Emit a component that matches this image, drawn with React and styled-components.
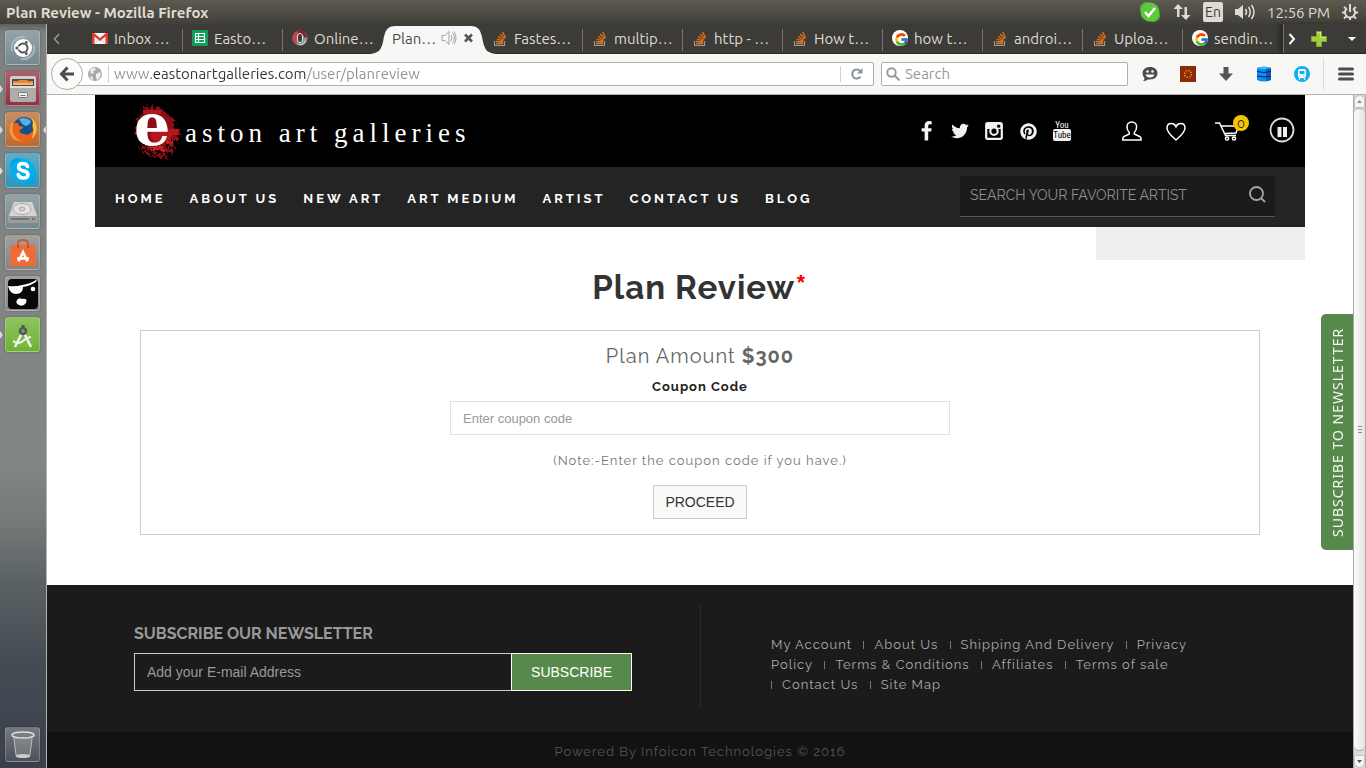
import React, { useState } from "react";
import styled, { createGlobalStyle, css } from "styled-components";
import { FaPinterest } from "react-icons/fa";
import { FcGoogle } from "react-icons/fc";

const ui = `"Ubuntu", "Open Sans", "Noto Sans", sans-serif`;
const raleway = `"Raleway", "Lato", sans-serif`;
const arial = `"Liberation Sans", Arial, sans-serif`;

const GlobalStyle = createGlobalStyle`
  * {
    box-sizing: border-box;
  }
  body {
    margin: 0;
    background: #fff;
    font-family: ${raleway};
  }
  button, input {
    margin: 0;
    outline: none;
    border-radius: 0;
  }
  button {
    cursor: pointer;
  }
  svg {
    display: block;
    flex: none;
    overflow: visible;
  }
`;

/* ---------- desktop ---------- */

const Desktop = styled.div`
  min-height: 100vh;
  display: flex;
  flex-direction: column;
`;

const TopPanel = styled.header`
  height: 24px;
  display: flex;
  align-items: center;
  justify-content: space-between;
  padding: 0 8px 0 6px;
  background: linear-gradient(#5d5b4f, #403f39);
  color: #dfdbd2;
  font-family: ${ui};
`;

const WindowTitle = styled.div`
  font-size: 15px;
  font-weight: 700;
`;

const Indicators = styled.div`
  display: flex;
  align-items: center;
  gap: 12px;
  font-size: 15px;
`;

const LangBadge = styled.span`
  width: 20px;
  height: 20px;
  border-radius: 2px;
  background: #dfdbd2;
  color: #3c3b37;
  font-size: 14px;
  line-height: 21px;
  text-align: center;
`;

const Workspace = styled.div`
  flex: 1;
  display: flex;
`;

const Launcher = styled.nav`
  width: 47px;
  flex: none;
  display: flex;
  flex-direction: column;
  gap: 6px;
  padding: 6px 6px 6px 5px;
  border-right: 1px solid #b5b3ac;
  background: linear-gradient(
    #5d5f5f,
    #7d8180 8px,
    #828685 440px,
    #747978 500px,
    #5a6164 560px,
    #454b53 640px,
    #3b414c 744px
  );
`;

const LauncherTile = styled.button`
  position: relative;
  width: 35px;
  height: 35px;
  padding: 0;
  display: flex;
  align-items: center;
  justify-content: center;
  border: 1px solid rgba(255, 255, 255, 0.22);
  border-radius: 3px;
  background: linear-gradient(rgba(255, 255, 255, 0.25), rgba(255, 255, 255, 0.03)),
    ${(props) => props.$tint};
  box-shadow: 0 0 2px rgba(0, 0, 0, 0.35);
  ${(props) =>
    props.$last &&
    css`
      margin-top: auto;
    `}
  ${(props) =>
    props.$running &&
    css`
      &::before {
        content: "";
        position: absolute;
        left: -6px;
        top: 13px;
        border: 4px solid transparent;
        border-right-width: 0;
        border-left: 3px solid #d8d8d8;
      }
    `}
  ${(props) =>
    props.$focused &&
    css`
      &::after {
        content: "";
        position: absolute;
        right: -7px;
        top: 13px;
        border: 4px solid transparent;
        border-left-width: 0;
        border-right: 3px solid #d8d8d8;
      }
    `}
`;

/* ---------- browser ---------- */

const Browser = styled.div`
  flex: 1;
  min-width: 0;
  display: flex;
  flex-direction: column;
  font-family: ${ui};
`;

const TabBar = styled.div`
  height: 30px;
  display: flex;
  background: #3c3b37;
  border-bottom: 1px solid #2b2a27;
`;

const TabScroll = styled.button`
  width: ${(props) => props.$width}px;
  flex: none;
  padding: 0;
  border: 0;
  background: none;
  display: flex;
  align-items: center;
  justify-content: center;
`;

const Tabs = styled.div`
  flex: 1;
  min-width: 0;
  margin-left: 16px;
  display: flex;
`;

const Tab = styled.button`
  position: relative;
  flex: 1 1 0;
  min-width: 0;
  height: 30px;
  padding: 0 0 2px 9px;
  border: 0;
  background: none;
  display: flex;
  align-items: center;
  gap: 6px;
  overflow: hidden;
  white-space: nowrap;
  color: #dfdbd2;
  font: 15px ${ui};
  ${(props) =>
    props.$divider &&
    css`
      &::after {
        content: "";
        position: absolute;
        right: 0;
        top: 5px;
        width: 1px;
        height: 22px;
        background: #75736b;
      }
    `}
`;

const ActiveTab = styled(Tab)`
  overflow: visible;
  gap: 5px;
  color: #4c4c4c;
  > * {
    position: relative;
  }
`;

const TabShape = styled.svg`
  && {
    position: absolute;
    left: -13px;
    bottom: 0;
    width: calc(100% + 26px);
    height: 28px;
  }
`;

const TabTools = styled.div`
  width: 83px;
  flex: none;
  display: flex;
  align-items: center;
  border-left: 1px solid #75736b;
  box-shadow: -4px 0 4px rgba(0, 0, 0, 0.3);
`;

const Toolbar = styled.div`
  height: 41px;
  display: flex;
  align-items: center;
  padding: 0 12px 0 4px;
  background: #f7f7f6;
  border-bottom: 1px solid #b4b3af;
`;

const BackButton = styled.button`
  z-index: 1;
  width: 32px;
  height: 32px;
  flex: none;
  padding: 0;
  display: flex;
  align-items: center;
  justify-content: center;
  border: 1px solid #b0afa9;
  border-radius: 50%;
  background: #fbfbfa;
`;

const UrlField = styled.div`
  flex: 1;
  min-width: 0;
  height: 24px;
  margin-left: -8px;
  padding-left: 12px;
  display: flex;
  align-items: center;
  border: 1px solid #b0afa9;
  border-radius: 2px;
  background: #fff;
`;

const UrlInput = styled.input`
  flex: 1;
  min-width: 0;
  height: 18px;
  margin-left: 6px;
  padding: 0 0 0 5px;
  border: 0;
  border-left: 1px solid #d0d0ce;
  font: 15px/18px ${ui};
  color: #8f8f8f;
  background: linear-gradient(to right, #8f8f8f 42px, #333 42px, #333 197px, #8f8f8f 197px);
  background-clip: text;
  -webkit-text-fill-color: transparent;
`;

const ReloadButton = styled.button`
  width: 33px;
  height: 16px;
  padding: 0;
  display: flex;
  align-items: center;
  justify-content: center;
  border: 0;
  border-left: 1px solid #d0d0ce;
  background: none;
`;

const SearchField = styled.label`
  width: 247px;
  height: 24px;
  margin-left: 7px;
  padding-left: 4px;
  display: flex;
  align-items: center;
  gap: 4px;
  border: 1px solid #b0afa9;
  border-radius: 2px;
  background: #fff;
`;

const SearchInput = styled.input`
  flex: 1;
  min-width: 0;
  padding: 0;
  border: 0;
  background: none;
  font: 15px/20px ${ui};
  &::placeholder {
    color: #999;
    opacity: 1;
  }
`;

const ToolButtons = styled.div`
  display: flex;
  margin-left: 3px;
`;

const ToolButton = styled.button`
  width: 38px;
  height: 32px;
  padding: 0;
  border: 0;
  background: none;
  display: flex;
  align-items: center;
  justify-content: center;
`;

const MenuButton = styled(ToolButton)`
  width: 31px;
  margin-left: 2px;
  padding-left: 13px;
  border-left: 1px solid #dcdcda;
`;

const Viewport = styled.div`
  flex: 1;
  display: flex;
  background: #fff;
`;

const Scrollbar = styled.div`
  width: 13px;
  flex: none;
  display: flex;
  flex-direction: column;
  border-left: 1px solid #a9a9a7;
  border-right: 1px solid #a9a9a7;
  background: #dcdbd9;
`;

const ScrollStep = styled.button`
  height: 13px;
  padding: 0;
  border: 1px solid #c4c3c1;
  border-radius: ${(props) => (props.$down ? "0 0 6px 6px" : "6px 6px 0 0")};
  background: #f5f5f4;
  display: flex;
  align-items: center;
  justify-content: center;
`;

const ScrollThumb = styled.div`
  flex: 1;
  margin-bottom: 4px;
  display: flex;
  flex-direction: column;
  align-items: center;
  justify-content: center;
  gap: 2px;
  border: 1px solid #a9a9a7;
  border-width: 1px 0;
  border-radius: 6px;
  background: linear-gradient(to right, #fcfcfc, #e4e3e1);
  > i {
    width: 4px;
    height: 1px;
    background: #8d8d8b;
  }
`;

/* ---------- site ---------- */

const Site = styled.div`
  position: relative;
  flex: 1;
  min-width: 0;
  display: flex;
  flex-direction: column;
  font-family: ${raleway};
`;

const Container = styled.div`
  width: 100%;
  max-width: 1210px;
  margin: 0 auto;
`;

const Masthead = styled.div`
  height: 72px;
  display: flex;
  align-items: center;
  padding: 0 10px 0 36px;
  background: #000;
`;

const Brand = styled.a`
  display: flex;
  align-items: center;
  margin-right: auto;
  color: #fff;
  text-decoration: none;
  font: 27px/32px "Liberation Serif", "Times New Roman", serif;
  letter-spacing: 5px;
  white-space: nowrap;
  span {
    padding-top: 3px;
  }
`;

const Social = styled.div`
  display: flex;
  gap: 10px;
  margin-right: 46px;
`;

const Account = styled.div`
  display: flex;
  align-items: center;
  gap: 20px;
`;

const IconLink = styled.a`
  position: relative;
  min-width: 24px;
  height: 26px;
  display: flex;
  align-items: center;
  justify-content: center;
  color: #f1f1f1;
`;

const CartLink = styled(IconLink)`
  margin-left: 7px;
`;

const CartCount = styled.span`
  position: absolute;
  top: -3px;
  right: 0;
  width: 16px;
  height: 16px;
  border-radius: 50%;
  background: #f6c500;
  color: #222;
  font-size: 13px;
  line-height: 18px;
  text-align: center;
`;

const NavBar = styled.nav`
  height: 60px;
  display: flex;
  align-items: center;
  justify-content: space-between;
  padding: 0 30px 2px 20px;
  background: #242424;
`;

const NavLinks = styled.div`
  display: flex;
  gap: 24px;
  padding-top: 5px;
`;

const NavLink = styled.a`
  color: #fff;
  font-size: 13px;
  font-weight: 700;
  line-height: 20px;
  letter-spacing: 3px;
  text-decoration: none;
  white-space: nowrap;
`;

const ArtistSearch = styled.form`
  width: 315px;
  height: 41px;
  display: flex;
  align-items: center;
  padding: 0 9px 2px 10px;
  background: #1b1b1b;
  border-bottom: 1px solid #555;
`;

const ArtistInput = styled.input`
  flex: 1;
  min-width: 0;
  padding: 0;
  border: 0;
  background: none;
  color: #ccc;
  font: 14px/20px ${raleway};
  &::placeholder {
    color: #8f8f8f;
    opacity: 1;
  }
`;

const PlainButton = styled.button`
  padding: 0;
  border: 0;
  background: none;
`;

const SideStrip = styled.div`
  width: 209px;
  height: 33px;
  margin-left: auto;
  background: #efefef;
`;

const Title = styled.h1`
  margin: 8px 0 22px;
  color: #333;
  font-size: 33px;
  font-weight: 700;
  line-height: 40px;
  letter-spacing: 1px;
  text-align: center;
  span {
    color: #f00;
  }
`;

const PlanBox = styled.form`
  margin: 0 45px 50px;
  padding: 10px 15px 15px;
  display: flex;
  flex-direction: column;
  align-items: center;
  border: 1px solid #ccc;
  letter-spacing: 1px;
`;

const Amount = styled.div`
  color: #666;
  font-size: 20px;
  line-height: 30px;
`;

const CouponLabel = styled.label`
  margin: 6px 0 4px;
  color: #222;
  font-size: 13px;
  font-weight: 700;
  line-height: 20px;
`;

const CouponInput = styled.input`
  width: 500px;
  max-width: 100%;
  height: 34px;
  padding: 0 12px;
  border: 1px solid #e1e1e1;
  background: #fff;
  color: #555;
  font: 13px ${arial};
  &::placeholder {
    color: #999;
    opacity: 1;
  }
`;

const Note = styled.p`
  margin: 16px 0 14px;
  color: #777;
  font-size: 13px;
  line-height: 20px;
`;

const ProceedButton = styled.button`
  height: 34px;
  padding: 0 11px;
  border: 1px solid #ccc;
  background: #f9f9f8;
  color: #333;
  font: 14px ${arial};
`;

const SubscribeTab = styled.button`
  position: absolute;
  right: 0;
  top: 219px;
  width: 32px;
  height: 236px;
  padding: 0;
  border: 0;
  border-radius: 0 5px 5px 0;
  background: #58894c;
  color: #f4f8f3;
  font: 14px "Noto Sans", "Open Sans", sans-serif;
  letter-spacing: 1px;
  white-space: nowrap;
  writing-mode: vertical-rl;
  transform: rotate(180deg);
`;

const Footer = styled.footer`
  flex: 1;
  padding: 19px 0 24px;
  background: #1b1b1b;
`;

const FooterColumns = styled(Container)`
  display: grid;
  grid-template-columns: 1fr 1fr;
`;

const Newsletter = styled.form`
  padding: 20px 68px 0 39px;
`;

const NewsletterTitle = styled.h4`
  margin: 0 0 9px;
  color: #999;
  font-size: 16px;
  font-weight: 700;
  line-height: 20px;
`;

const NewsletterRow = styled.div`
  display: flex;
`;

const EmailInput = styled.input`
  flex: 1;
  min-width: 0;
  height: 38px;
  padding: 0 12px;
  border: 1px solid #ccc;
  border-right: 0;
  background: transparent;
  color: #ccc;
  font: 14px ${arial};
  &::placeholder {
    color: #999;
    opacity: 1;
  }
`;

const SubscribeButton = styled.button`
  height: 38px;
  padding: 0 19px;
  border: 1px solid #fff;
  background: #58894c;
  color: #fff;
  font: 14px ${arial};
`;

const FooterNav = styled.div`
  min-height: 104px;
  padding: 31px 116px 0 70px;
  border-left: 1px solid #2a2a2a;
`;

const LinkList = styled.ul`
  margin: 0;
  padding: 0;
  list-style: none;
  color: #aaa;
  font-size: 13px;
  line-height: 20px;
  letter-spacing: 1px;
  li {
    display: inline;
    margin-right: 7px;
  }
  li + li::before {
    content: "";
    display: inline-block;
    width: 1px;
    height: 8px;
    margin-right: 10px;
    background: #777;
  }
  a {
    color: inherit;
    text-decoration: none;
  }
`;

const Copyright = styled.div`
  height: 36px;
  padding-top: 2px;
  background: #121212;
  color: #555;
  font-size: 13px;
  line-height: 36px;
  letter-spacing: 1px;
  text-align: center;
`;

/* ---------- icons ---------- */

const StackIcon = () => (
  <svg width="16" height="16" viewBox="0 0 16 16" fill="none">
    <path d="M2.500 11v4.500h10V11" stroke="#9a9a98" strokeWidth="1.200" />
    <path
      d="M4 13.500h7M4.100 11.300l6.900.700M4.700 9l6.600 1.900M6 6.500l5.900 3.200M8 4l4.800 4.600M10.700 2l2.900 6"
      stroke="#e8731b"
      strokeWidth="1.300"
    />
  </svg>
);

const GmailIcon = () => (
  <svg width="16" height="16" viewBox="0 0 16 16">
    <path d="M0 3h16v11H0z" fill="#f5f5f5" />
    <path d="M0 3h2l6 5 6-5h2v11h-2.500V6.500L8 11 2.500 6.500V14H0z" fill="#dd3b30" />
    <path d="M3 13.500 6.500 10M13 13.500 9.500 10" stroke="#ccc" />
  </svg>
);

const SheetsIcon = () => (
  <svg width="16" height="16" viewBox="0 0 16 16">
    <rect width="16" height="16" rx="1" fill="#0f9d58" />
    <path d="M3.500 3.500h9v9h-9zM3.500 6.500h9M3.500 9.500h9M6.500 3.500v9" stroke="#fff" strokeWidth="1.200" fill="none" />
  </svg>
);

const RingIcon = () => (
  <svg width="16" height="16" viewBox="0 0 16 16">
    <circle cx="8" cy="8" r="7.600" fill="#8f8f8f" />
    <path d="M9 .500a7.600 7.600 0 0 0-5 14C6 13 3 5 9 .500z" fill="#c2444c" />
    <path d="M5 1c5-2 9 1 10 6l-2 1C11 5 10 3 6 3z" fill="#8e1d25" />
    <path d="M5 14q4 1 6-1l3-4q0 5-5 6.500z" fill="#c8c8c8" />
    <ellipse cx="8" cy="8" rx="2.600" ry="4.500" fill="#3c3b37" stroke="#e6e6e6" />
  </svg>
);

const favicons = {
  gmail: <GmailIcon />,
  sheets: <SheetsIcon />,
  ring: <RingIcon />,
  stack: <StackIcon />,
  google: (
    <svg width="16" height="16" viewBox="0 0 16 16">
      <circle cx="8" cy="8" r="8" fill="#fff" />
      <FcGoogle x="2" y="2" width="12" height="12" />
    </svg>
  ),
};

const tabs = [
  { icon: "gmail", label: "Inbox …", divider: true },
  { icon: "sheets", label: "Easto…", divider: true },
  { icon: "ring", label: "Online…" },
  { label: "Plan…", active: true },
  { icon: "stack", label: "Fastes…", divider: true },
  { icon: "stack", label: "multip…", divider: true },
  { icon: "stack", label: "http - …", divider: true },
  { icon: "stack", label: "How t…", divider: true },
  { icon: "google", label: "how t…", divider: true },
  { icon: "stack", label: "androi…", divider: true },
  { icon: "stack", label: "Uploa…", divider: true },
  { icon: "google", label: "sendin…" },
];

const launcherItems = [
  {
    name: "Dash",
    tint: "#71858c",
    icon: (
      <svg width="28" height="28" viewBox="0 0 28 28" fill="none">
        <path d="M3 17C1 8 8 2 16 3M25 11c2 9-5 15-13 14" stroke="#a7b8bd" strokeWidth="2" />
        <circle cx="14" cy="14" r="9" fill="#fff" />
        <circle cx="14" cy="14" r="4.500" stroke="#555" strokeWidth="2" />
        <path d="M7 14h4M16 9.500l2-3.500M16 18.500l2 3.500" stroke="#fff" strokeWidth="3" />
        <g fill="#555">
          <circle cx="7.800" cy="14" r="1.500" />
          <circle cx="17.200" cy="8.500" r="1.500" />
          <circle cx="17.200" cy="19.500" r="1.500" />
        </g>
      </svg>
    ),
  },
  {
    name: "Files",
    tint: "#8c2c3c",
    running: true,
    icon: (
      <svg width="28" height="28" viewBox="0 0 28 28">
        <path d="M1 3q0-2 2-2h22q2 0 2 2v8H1z" fill="#d0cfcc" />
        <path d="M3 4h22v8H3z" fill="#514b46" />
        <path d="M4 6h5l1-1h8l1 1h5v4H4z" fill="#e8853a" />
        <path d="M4 8h20v2H4z" fill="#f7b377" />
        <path d="M1 11h26v14q0 2-2 2H3q-2 0-2-2z" fill="#aeadaa" />
        <path d="M1 11h26v2H1z" fill="#dededb" />
        <rect x="9.500" y="17.500" width="9" height="5" rx="1" fill="#eee" stroke="#777" />
        <path d="M11.500 20.500h5" stroke="#777" />
      </svg>
    ),
  },
  {
    name: "Firefox",
    tint: "#b5682c",
    running: true,
    focused: true,
    icon: (
      <svg width="30" height="30" viewBox="0 0 30 30">
        <circle cx="16" cy="13" r="11" fill="#17508f" />
        <path d="M11 4q7-3 12 2-1 4-5 5-4-1-7-7z" fill="#58aee0" />
        <path d="M27 8q2 4 1.500 8Q27 28 15 28.500 3 28 1.500 16q0-6 3-10 0 2 1 3 3-2 5-1-1 2 1 3l4 1q-1 2-4 3 0 4 5 4 3 2 6-1 6-5 5.500-10z" fill="#e8641b" />
        <path d="M24 3q5 5 4.500 12-1 6-5 9 3-7 1-12 1-5-.500-9z" fill="#fbc436" />
        <path d="M1.500 16q0-6 3-10 0 2 1 3-2 5 0 10 3 6 9 7-11 1-13-10z" fill="#f5993a" />
      </svg>
    ),
  },
  {
    name: "Skype",
    tint: "#2d90b4",
    running: true,
    icon: (
      <svg width="30" height="30" viewBox="0 0 30 30">
        <circle cx="9.500" cy="9.500" r="7.500" fill="#00a5e5" />
        <circle cx="20.500" cy="20.500" r="7.500" fill="#00a5e5" />
        <circle cx="15" cy="15" r="12" fill="#00aff0" />
        <path
          d="M19.500 10.500q-1-3-4.500-3-4.500 0-4.500 3.500 0 2.700 4.500 3.700 5 1 5 3.800 0 3.500-4.800 3.500-4.200 0-5-3.500"
          fill="none"
          stroke="#fff"
          strokeWidth="3.500"
          strokeLinecap="round"
        />
      </svg>
    ),
  },
  {
    name: "Disk",
    tint: "#71858c",
    icon: (
      <svg width="30" height="22" viewBox="0 0 30 22">
        <path d="M5 0h20l5 14v6q0 2-2 2H2q-2 0-2-2v-6z" fill="#9b9c9c" />
        <path d="M6 1h18l5 14H1z" fill="#d3d4d3" />
        <ellipse cx="14" cy="8" rx="9" ry="5.500" fill="#e3e3e2" stroke="#aaa" />
        <ellipse cx="14" cy="8" rx="3" ry="2" fill="#d0d0d0" stroke="#aaa" />
        <path d="M3 18h18M24 18h3" stroke="#666" strokeWidth="1.500" />
      </svg>
    ),
  },
  {
    name: "Software Center",
    tint: "#80807e",
    icon: (
      <svg width="28" height="30" viewBox="0 0 28 30">
        <path d="M9 10V5q0-3 5-3t5 3v5" fill="none" stroke="#d9572c" strokeWidth="2" />
        <path d="M2 7h24l1 20q0 1-1 1H2q-1 0-1-1z" fill="#ee6b36" />
        <path d="M9 10V7M19 10V7" stroke="#c94e26" strokeWidth="2" />
        <path d="M9.500 23.500 14 14l4.500 9.500M8 20.500h12" fill="none" stroke="#fff" strokeWidth="2.500" />
      </svg>
    ),
  },
  {
    name: "Pirate",
    tint: "#80807e",
    icon: (
      <svg width="30" height="30" viewBox="0 0 30 30">
        <rect width="30" height="30" rx="4" fill="#080808" />
        <path d="M0 7q8 1 14-1 8-1 14-5l1 1q-6 5-14 6 0 7-7 7Q2 15 0 7z" fill="#fff" />
        <circle cx="25" cy="10" r="2.300" fill="#fff" />
        <path d="M9 21q2-3 5-1 6-1 4 4-3 4-7 2-4-2-2-5z" fill="#fff" />
      </svg>
    ),
  },
  {
    name: "Android Studio",
    tint: "#6aaf2c",
    running: true,
    icon: (
      <svg width="28" height="28" viewBox="0 0 28 28" fill="none">
        <circle cx="14" cy="14" r="12" fill="#7fbf4a" opacity=".6" />
        <path d="m13 12-7 14M15 12l7 14" stroke="#f1f1f1" strokeWidth="2.500" />
        <path d="M4 20q5 4 10 0t8-4" stroke="#f1f1f1" strokeWidth="2" />
        <path d="M14 4v3" stroke="#4c5a5f" strokeWidth="3" />
        <circle cx="14" cy="10" r="3" fill="#8aa05e" stroke="#4c5a5f" strokeWidth="2.500" />
      </svg>
    ),
  },
  {
    name: "Trash",
    tint: "#454c53",
    last: true,
    icon: (
      <svg width="24" height="28" viewBox="0 0 24 28">
        <path d="m2 4 3 21q7 3 14 0l3-21z" fill="#aab0b2" opacity=".35" />
        <path d="m3 7 2 17M21 7l-2 17" stroke="#b9bdbe" />
        <ellipse cx="12" cy="25" rx="7.500" ry="2" fill="#c9cbcb" />
        <ellipse cx="12" cy="4" rx="11" ry="3" fill="#777d80" stroke="#dcdddd" strokeWidth="1.500" />
      </svg>
    ),
  },
];

const Facebook = () => (
  <svg width="21" height="21" viewBox="0 0 1792 1792" fill="currentColor">
    <path d="M1343 12v264h-157q-86 0-116 36t-30 108v189h293l-39 296h-254v759h-306v-759h-255v-296h255v-218q0-186 104-288.500t277-102.500q147 0 228 12z" />
  </svg>
);

const Twitter = () => (
  <svg width="20" height="20" viewBox="0 0 1792 1792" fill="currentColor">
    <path d="M1684 408q-67 98-162 167 1 14 1 42 0 130-38 259.500t-115.500 248.500-184.500 210.500-258 146-323 54.500q-271 0-496-145 35 4 78 4 225 0 401-138-105-2-188-64.500t-114-159.500q33 5 61 5 43 0 85-11-112-23-185.500-111.500t-73.500-205.500v-4q68 38 146 41-66-44-105-115t-39-154q0-88 44-163 121 149 294.500 238.500t371.500 99.500q-8-38-8-74 0-134 94.500-228.500t228.500-94.500q140 0 236 102 109-21 205-78-37 115-142 178 93-10 186-50z" />
  </svg>
);

const Instagram = () => (
  <svg width="18" height="18" viewBox="0 0 18 18">
    <rect x="1.200" y="1.200" width="15.600" height="15.600" rx="1.500" fill="none" stroke="currentColor" strokeWidth="2.200" />
    <path d="M1 1h16v6h-4a5 5 0 0 0-8 0H1z" fill="currentColor" />
    <circle cx="9" cy="9.200" r="3.700" fill="#000" stroke="currentColor" strokeWidth="2.200" />
    <rect x="12.200" y="2.800" width="3" height="2.800" fill="#000" />
  </svg>
);

const YouTube = () => (
  <svg
    width="18"
    height="20"
    viewBox="0 0 18 20"
    fontFamily="Ubuntu Condensed, Roboto Condensed, Liberation Sans Narrow, Liberation Sans"
    fontSize="9"
  >
    <text x="9" y="7" textAnchor="middle" fill="#fff">
      You
    </text>
    <rect x="0" y="8" width="18" height="12" rx="2" fill="#f1f1f1" />
    <text x="9" y="17" textAnchor="middle" fill="#000">
      Tube
    </text>
  </svg>
);

const LogoMark = () => (
  <svg width="54" height="72" viewBox="0 -6 54 72">
    <filter id="splatter" x="-20%" y="-20%" width="140%" height="140%">
      <feTurbulence type="fractalNoise" baseFrequency="0.35" numOctaves="2" seed="4" result="noise" />
      <feDisplacementMap in="SourceGraphic" in2="noise" scale="12" />
    </filter>
    <g filter="url(#splatter)">
      <path d="M10 10 16 6l14 1 6 5 9 8-2 10 6 1-4 12-3 8-7 5-10 0-12-3-5-5 2-6-6-10z" fill="#8c0f16" />
      <path
        d="M8 14 16 9M34 10l7 6M8 42l8 3M10 48l10 2M18 53l9-1M24 50l9 3M34 51l5 5M40 45l5 5M40 40l7 3M6 24l4 6M42 24l5-1M12 51l4 4M34 46l6 1"
        stroke="#000"
        strokeWidth="2"
      />
      <path d="M20 45h12v4H20zM36 39h5v4h-5z" fill="#c4252c" />
    </g>
    <path d="M12 9h18v4H12z" fill="#a81b21" />
    <path d="M27 28h22l-2 6h-6l-2 4-8 4-8 0-4-9z" fill="#b3161d" />
    <text x="3" y="44" fontFamily="DejaVu Serif, serif" fontWeight="700" fontSize="57" letterSpacing="0" fill="#fff">
      e
    </text>
  </svg>
);

const navItems = ["HOME", "ABOUT US", "NEW ART", "ART MEDIUM", "ARTIST", "CONTACT US", "BLOG"];

const footerLinks = [
  "My Account",
  "About Us",
  "Shipping And Delivery",
  "Privacy Policy",
  "Terms & Conditions",
  "Affiliates",
  "Terms of sale",
  "Contact Us",
  "Site Map",
];

const SystemPanel = () => (
  <TopPanel>
    <WindowTitle>Plan Review - Mozilla Firefox</WindowTitle>
    <Indicators>
      <svg width="22" height="22" viewBox="0 0 22 22">
        <circle cx="7.500" cy="7.500" r="6.500" fill="#4db82f" />
        <circle cx="14.500" cy="14.500" r="6.500" fill="#4db82f" />
        <circle cx="11" cy="11" r="9.500" fill="#5cc83b" />
        <path d="m6 11 3.500 4L16 7" fill="none" stroke="#fff" strokeWidth="2.500" />
      </svg>
      <svg width="18" height="18" viewBox="0 0 18 18" fill="#dfdbd2">
        <path d="M5 1 .500 6H4v8h2.500V6H10zM13 17l4.500-5H14V4h-2.500v8H8z" />
      </svg>
      <LangBadge>En</LangBadge>
      <svg width="20" height="18" viewBox="0 0 20 18" fill="none" stroke="#dfdbd2" strokeWidth="1.500">
        <path d="M0 6h3l5-4v14l-5-4H0z" fill="#dfdbd2" stroke="none" />
        <path d="M10.500 6q2 3 0 6M13.500 4q3.500 5 0 10M16.500 2q5 7 0 14" />
      </svg>
      <span>12:56 PM</span>
      <svg width="16" height="18" viewBox="0 0 16 18" fill="none" stroke="#dfdbd2">
        <path d="M5 5.500a5 5 0 1 0 6 0" strokeWidth="2" />
        <path d="M8 1v8" strokeWidth="2" />
        <path d="M2 4l2 1.500M14 4l-2 1.500M0 9.500h3M16 9.500h-3M2 15.500l2-2M14 15.500l-2-2M8 15v2" strokeWidth="2" />
      </svg>
    </Indicators>
  </TopPanel>
);

const BrowserTabs = () => (
  <TabBar>
    <TabScroll $width={20} aria-label="Scroll tabs left">
      <svg width="8" height="12" viewBox="0 0 8 12" fill="none" stroke="#99978f" strokeWidth="1.500">
        <path d="M6 1 1.500 6 6 11" />
      </svg>
    </TabScroll>
    <Tabs>
      {tabs.map((tab, index) =>
        tab.active ? (
          <ActiveTab key={index}>
            <TabShape viewBox="0 0 126 28" preserveAspectRatio="none">
              <path d="M0 28C9 27 11 24 13 16 15 4 17 0 26 0h74c9 0 11 4 13 16 2 8 4 11 13 12z" fill="#f7f7f6" />
            </TabShape>
            <span>{tab.label}</span>
            <svg width="16" height="16" viewBox="0 0 16 16" fill="none" stroke="#a3a3a3">
              <path d="M1 5.500h3l4-4v13l-4-4H1zM10 5q2 3 0 6M11.500 3q4 5 0 10M13 1.500q4 6.500 0 13" />
            </svg>
            <svg width="14" height="10" viewBox="0 0 14 10" fill="none" stroke="#555" strokeWidth="2.500">
              <path d="m3 1.500 7 7M10 1.500l-7 7" />
            </svg>
          </ActiveTab>
        ) : (
          <Tab key={index} $divider={tab.divider}>
            {favicons[tab.icon]}
            <span>{tab.label}</span>
          </Tab>
        )
      )}
    </Tabs>
    <TabTools>
      <TabScroll $width={16} aria-label="Scroll tabs right">
        <svg width="8" height="12" viewBox="0 0 8 12" fill="none" stroke="#fff" strokeWidth="2">
          <path d="M1.500 1 6 6l-4.500 5" />
        </svg>
      </TabScroll>
      <TabScroll $width={38} aria-label="New tab">
        <svg width="16" height="16" viewBox="0 0 16 16">
          <path d="M5.500.500h5v5h5v5h-5v5h-5v-5h-5v-5h5z" fill="#a4cc3c" stroke="#7fa52a" />
          <path d="M6.500 1.500h3v5h5" fill="none" stroke="#d3e88d" />
        </svg>
      </TabScroll>
      <TabScroll $width={28} aria-label="List all tabs">
        <svg width="8" height="4" viewBox="0 0 8 4">
          <path d="M0 0h8L4 4z" fill="#fff" />
        </svg>
      </TabScroll>
    </TabTools>
  </TabBar>
);

const BrowserToolbar = () => {
  const [url, setUrl] = useState("www.eastonartgalleries.com/user/planreview");
  return (
    <Toolbar>
      <BackButton aria-label="Back">
        <svg width="16" height="16" viewBox="0 0 16 16" fill="none" stroke="#4c4c4c" strokeWidth="3">
          <path d="M8.500 1.500 2.500 8l6 6.500M3 8h12" />
        </svg>
      </BackButton>
      <UrlField>
        <svg width="14" height="14" viewBox="0 0 14 14">
          <circle cx="7" cy="7" r="7" fill="#a9a9a9" />
          <path d="M2 3q3-3 5-2l1 2-3 1 1 2-3 1zM8 7l4-2 1 2-2 5-2 1-1-3zM2 9l3 1v3L3 12z" fill="#eee" />
        </svg>
        <UrlInput aria-label="Address" value={url} onChange={(e) => setUrl(e.target.value)} />
        <ReloadButton aria-label="Reload">
          <svg width="12" height="12" viewBox="0 0 12 12">
            <path d="M9.500 8.500a4.500 4.500 0 1 1 0-5" fill="none" stroke="#8792a0" strokeWidth="2" />
            <path d="M11.500 0v5.500H6z" fill="#8792a0" />
          </svg>
        </ReloadButton>
      </UrlField>
      <SearchField>
        <svg width="15" height="15" viewBox="0 0 15 15" fill="none" stroke="#999" strokeWidth="2">
          <circle cx="5.500" cy="5.500" r="4.200" />
          <path d="m8.500 8.500 5 5" />
        </svg>
        <SearchInput placeholder="Search" aria-label="Search" />
      </SearchField>
      <ToolButtons>
        <ToolButton aria-label="Chat">
          <svg width="16" height="16" viewBox="0 0 16 16">
            <path d="M8 1c4.500 0 7.500 2.700 7.500 6.300S12.500 13.500 8 13.500l-2 0Q4 15 1 15q1.500-1 1.500-3Q.500 10 .500 7.300C.500 3.700 3.500 1 8 1z" fill="#4c4c4c" />
            <circle cx="5.500" cy="5.500" r="1.200" fill="#fff" />
            <circle cx="10.500" cy="5.500" r="1.200" fill="#fff" />
            <path d="M3.500 8.500h9q-1 3-4.500 3T3.500 8.500z" fill="#fff" />
          </svg>
        </ToolButton>
        <ToolButton aria-label="Extension">
          <svg width="16" height="16" viewBox="0 0 16 16">
            <path d="M0 0h16v16H0z" fill="#8d2a06" />
            <circle cx="8" cy="8" r="3.500" fill="none" stroke="#e2911f" strokeWidth="1.500" strokeDasharray="1.500 1.200" />
          </svg>
        </ToolButton>
        <ToolButton aria-label="Downloads">
          <svg width="16" height="16" viewBox="0 0 16 16">
            <path d="M5.500 1h5v6.500H15L8 15 1 7.500h4.500z" fill="#555" />
          </svg>
        </ToolButton>
        <ToolButton aria-label="Database">
          <svg width="14" height="16" viewBox="0 0 14 16">
            <path d="M0 2q7-3 14 0v12q-7 3-14 0z" fill="#0b8ff0" />
            <path d="M9 1l5 1v12l-5 1z" fill="#0a5cc4" />
            <path d="M0 5.500q7 2 14 0M0 10q7 2 14 0" fill="none" stroke="#06265c" />
            <path d="M0 2q7-2 14 0-7 2-14 0z" fill="#35c4fa" />
          </svg>
        </ToolButton>
        <ToolButton aria-label="Transit">
          <svg width="16" height="16" viewBox="0 0 16 16">
            <circle cx="8" cy="8" r="8" fill="#0fb0f0" />
            <rect x="4" y="3" width="8" height="9" rx="2" fill="#fff" />
            <path d="M5.500 5h5v3h-5z" fill="#0fb0f0" />
            <path d="m5 14 1-2M11 14l-1-2" stroke="#fff" />
            <path d="M5.500 10h1M9.500 10h1" stroke="#0fb0f0" />
          </svg>
        </ToolButton>
        <MenuButton aria-label="Menu">
          <svg width="16" height="14" viewBox="0 0 16 14" stroke="#4c4c4c" strokeWidth="3" strokeLinecap="round">
            <path d="M1.500 2h13M1.500 7h13M1.500 12h13" />
          </svg>
        </MenuButton>
      </ToolButtons>
    </Toolbar>
  );
};

const SiteHeader = () => (
  <Container>
    <Masthead>
      <Brand href="#">
        <LogoMark />
        <span>aston art galleries</span>
      </Brand>
      <Social>
        <IconLink href="#" aria-label="Facebook"><Facebook /></IconLink>
        <IconLink href="#" aria-label="Twitter"><Twitter /></IconLink>
        <IconLink href="#" aria-label="Instagram"><Instagram /></IconLink>
        <IconLink href="#" aria-label="Pinterest"><FaPinterest size={17} /></IconLink>
        <IconLink href="#" aria-label="YouTube"><YouTube /></IconLink>
      </Social>
      <Account>
        <IconLink href="#" aria-label="My account">
          <svg width="20" height="20" viewBox="0 0 20 20" fill="none" stroke="#fff" strokeWidth="1.500">
            <path d="M7.300 11.500C5.500 10 5 8 5 5.800 5 3 7 1 9.800 1s4.800 2 4.800 4.800c0 2.200-.500 4.200-2.300 5.700v1.500l5.700 2.700q1 .600 1 2V19H.800v-1.300q0-1.400 1-2L7.300 13z" />
          </svg>
        </IconLink>
        <IconLink href="#" aria-label="Wishlist">
          <svg width="20" height="20" viewBox="0 0 20 20" fill="none" stroke="#fff" strokeWidth="1.500">
            <path d="M10 19C6 15.500 1 11.500 1 7 1 4 3 2.500 5.300 2.500 7.500 2.500 9.300 3.800 10 5.700 10.700 3.800 12.500 2.500 14.700 2.500 17 2.500 19 4 19 7c0 4.500-5 8.500-9 12z" />
          </svg>
        </IconLink>
        <CartLink href="#" aria-label="Cart">
          <svg width="34" height="20" viewBox="0 0 34 20" fill="none" stroke="#fff" strokeWidth="1.500">
            <path d="M0 2h4.500l6 12.500H21M6 5h17.500l-2.500 7-11 .500" />
            <circle cx="12" cy="17.500" r="1.600" />
            <circle cx="19" cy="17.500" r="1.600" />
          </svg>
          <CartCount>0</CartCount>
        </CartLink>
        <PlainButton aria-label="Pause">
          <svg width="26" height="26" viewBox="0 0 26 26">
            <circle cx="13" cy="12" r="11.500" fill="none" stroke="#ddd" strokeWidth="1.800" />
            <path d="M8.500 9h4v10h-4zM14 9h4v10h-4z" fill="#eee" />
          </svg>
        </PlainButton>
      </Account>
    </Masthead>
    <NavBar>
      <NavLinks>
        {navItems.map((item) => (
          <NavLink href="#" key={item}>
            {item}
          </NavLink>
        ))}
      </NavLinks>
      <ArtistSearch onSubmit={(e) => e.preventDefault()}>
        <ArtistInput placeholder="SEARCH YOUR FAVORITE ARTIST" aria-label="Search your favorite artist" />
        <PlainButton aria-label="Find">
          <svg width="17" height="17" viewBox="0 0 17 17" fill="none" stroke="#a5a5a5" strokeWidth="1.800">
            <circle cx="7.500" cy="7.500" r="6.500" />
            <path d="m12 12 4 4" />
          </svg>
        </PlainButton>
      </ArtistSearch>
    </NavBar>
    <SideStrip />
  </Container>
);

const PlanReview = () => {
  const [coupon, setCoupon] = useState("");
  return (
    <Container as="main">
      <Title>
        Plan Review<span>*</span>
      </Title>
      <PlanBox onSubmit={(e) => e.preventDefault()}>
        <Amount>
          Plan Amount <b>$300</b>
        </Amount>
        <CouponLabel htmlFor="coupon">Coupon Code</CouponLabel>
        <CouponInput
          id="coupon"
          placeholder="Enter coupon code"
          value={coupon}
          onChange={(e) => setCoupon(e.target.value)}
        />
        <Note>(Note:-Enter the coupon code if you have.)</Note>
        <ProceedButton>PROCEED</ProceedButton>
      </PlanBox>
    </Container>
  );
};

const SiteFooter = () => (
  <>
    <Footer>
      <FooterColumns>
        <Newsletter onSubmit={(e) => e.preventDefault()}>
          <NewsletterTitle>SUBSCRIBE OUR NEWSLETTER</NewsletterTitle>
          <NewsletterRow>
            <EmailInput type="email" placeholder="Add your E-mail Address" aria-label="E-mail address" />
            <SubscribeButton>SUBSCRIBE</SubscribeButton>
          </NewsletterRow>
        </Newsletter>
        <FooterNav>
          <LinkList>
            {footerLinks.map((link) => (
              <React.Fragment key={link}>
                <li>
                  <a href="#">{link}</a>
                </li>{" "}
              </React.Fragment>
            ))}
          </LinkList>
        </FooterNav>
      </FooterColumns>
    </Footer>
    <Copyright>Powered By Infoicon Technologies © 2016</Copyright>
  </>
);

const App = () => (
  <Desktop>
    <GlobalStyle />
    <SystemPanel />
    <Workspace>
      <Launcher>
        {launcherItems.map((item) => (
          <LauncherTile
            key={item.name}
            aria-label={item.name}
            $tint={item.tint}
            $running={item.running}
            $focused={item.focused}
            $last={item.last}
          >
            {item.icon}
          </LauncherTile>
        ))}
      </Launcher>
      <Browser>
        <BrowserTabs />
        <BrowserToolbar />
        <Viewport>
          <Site>
            <SiteHeader />
            <PlanReview />
            <SiteFooter />
            <SubscribeTab>SUBSCRIBE TO NEWSLETTER</SubscribeTab>
          </Site>
          <Scrollbar>
            <ScrollStep aria-label="Scroll up">
              <svg width="5" height="3" viewBox="0 0 5 3">
                <path d="M0 3h5L2.500 0z" fill="#8d8d8b" />
              </svg>
            </ScrollStep>
            <ScrollThumb>
              <i />
              <i />
              <i />
            </ScrollThumb>
            <ScrollStep $down aria-label="Scroll down">
              <svg width="5" height="3" viewBox="0 0 5 3">
                <path d="M0 0h5L2.500 3z" fill="#555" />
              </svg>
            </ScrollStep>
          </Scrollbar>
        </Viewport>
      </Browser>
    </Workspace>
  </Desktop>
);

export default App;
